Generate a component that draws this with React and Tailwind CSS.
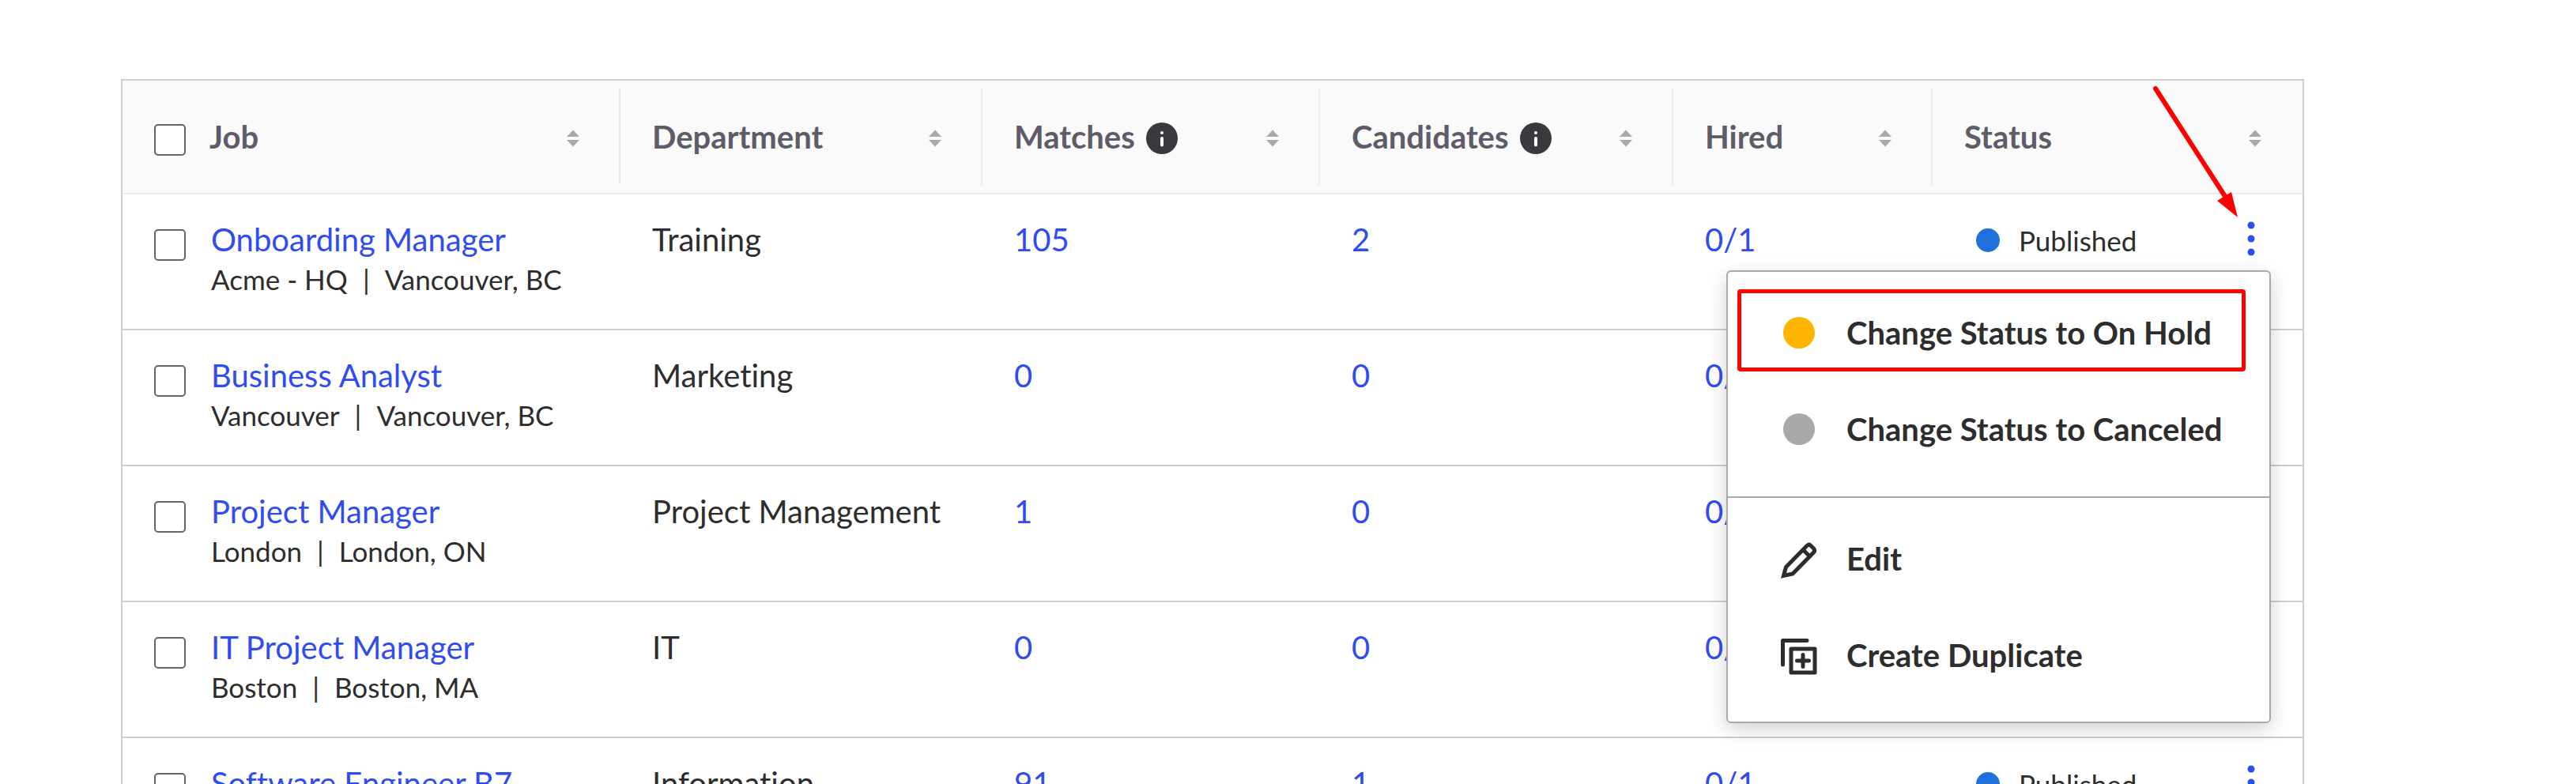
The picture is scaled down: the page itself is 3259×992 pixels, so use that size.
import { useState } from 'react'

const COLUMNS = [
  { key: 'job', label: 'Job', width: 'w-[630px]' },
  { key: 'department', label: 'Department', width: 'w-[458px]' },
  { key: 'matches', label: 'Matches', width: 'w-[427px]', info: true },
  { key: 'candidates', label: 'Candidates', width: 'w-[447px]', info: true },
  { key: 'hired', label: 'Hired', width: 'w-[328px]' },
  { key: 'status', label: 'Status', width: 'w-[468px]' },
]

const JOBS = [
  { id: 1, title: 'Onboarding Manager', office: 'Acme - HQ', city: 'Vancouver, BC', department: 'Training', matches: 105, candidates: 2, hired: '0/1' },
  { id: 2, title: 'Business Analyst', office: 'Vancouver', city: 'Vancouver, BC', department: 'Marketing', matches: 0, candidates: 0, hired: '0/1' },
  { id: 3, title: 'Project Manager', office: 'London', city: 'London, ON', department: 'Project Management', matches: 1, candidates: 0, hired: '0/1' },
  { id: 4, title: 'IT Project Manager', office: 'Boston', city: 'Boston, MA', department: 'IT', matches: 0, candidates: 0, hired: '0/1' },
  { id: 5, title: 'Software Engineer B7', office: 'Boston', city: 'Boston, MA', department: 'Information', matches: 91, candidates: 1, hired: '0/1' },
]

function Checkbox({ label }) {
  return (
    <input
      type="checkbox"
      aria-label={label}
      className="size-10 shrink-0 appearance-none rounded-[5px] border-2 border-[#64646e] bg-white checked:bg-[#304cf0]"
    />
  )
}

function SortButton({ label }) {
  return (
    <button type="button" aria-label={`Sort by ${label}`} className="ml-auto shrink-0">
      <svg width="16" height="22" viewBox="0 0 16 22" fill="#a9a9a9">
        <path d="M8 0.5 16 9H0Z" />
        <path d="M8 21.5 16 13H0Z" />
      </svg>
    </button>
  )
}

function InfoIcon() {
  return (
    <svg width="40" height="40" viewBox="0 0 40 40" className="ml-[14px] shrink-0">
      <circle cx="20" cy="20" r="20" fill="#3a393e" />
      <circle cx="20" cy="13" r="2" fill="#fff" />
      <path d="M20 20V28.500" stroke="#fff" strokeWidth="4" strokeLinecap="round" />
    </svg>
  )
}

function PencilIcon() {
  return (
    <svg width="46" height="46" viewBox="0 0 46 46" fill="none" stroke="#2d2d2d" strokeWidth="5" strokeLinejoin="miter">
      <path d="M3.500 42.500 6.500 31.500 33 4.500Q35.500 2 38 4.500L41.500 8Q44 10.500 41.500 13L15 40Z" />
      <path d="M28 9.500 36.500 18" />
    </svg>
  )
}

function DuplicateIcon() {
  return (
    <svg width="46" height="46" viewBox="0 0 46 46" fill="none" stroke="#2d2d2d" strokeWidth="5" strokeLinecap="round" strokeLinejoin="round">
      <path d="M2.500 33V2.500H33" />
      <path d="M13 13H43V43H13Z" />
      <path d="M28 20.500V35.500M20.500 28H35.500" />
    </svg>
  )
}

function MenuItem({ icon, children }) {
  return (
    <button type="button" role="menuitem" className="flex h-[122px] w-full items-center pl-[66px] text-left font-bold text-[#2d2d2d]">
      <span className="flex w-12 shrink-0 justify-center">{icon}</span>
      <span className="ml-9 whitespace-nowrap">{children}</span>
    </button>
  )
}

function ActionsMenu() {
  return (
    <div
      role="menu"
      className="absolute top-[96px] right-[40px] z-10 w-[689px] rounded-md border-2 border-[#a9a9a9] bg-white shadow-[0_8px_24px_rgba(0,0,0,0.18)]"
    >
      <div className="border-b-2 border-[#a9a9a9] pt-4 pb-6">
        <MenuItem icon={<span className="size-10 rounded-full bg-[#ffb400]" />}>Change Status to On Hold</MenuItem>
        <MenuItem icon={<span className="size-10 rounded-full bg-[#a9a9a9]" />}>Change Status to Canceled</MenuItem>
      </div>
      <div className="pt-4 pb-[23px]">
        <MenuItem icon={<span className="pt-1"><PencilIcon /></span>}>Edit</MenuItem>
        <MenuItem icon={<span className="pt-1"><DuplicateIcon /></span>}>Create Duplicate</MenuItem>
      </div>
      {/* Highlight around the first action */}
      <div className="pointer-events-none absolute top-[22px] left-3 h-[104px] w-[643px] rounded-sm border-[5px] border-[#ff0000]" />
    </div>
  )
}

// Callout arrow that points at the row's kebab button
function Arrow() {
  return (
    <svg width="112" height="172" viewBox="0 0 112 172" className="pointer-events-none absolute -top-[139px] right-[79px] z-20">
      <path d="M5 5 94 143" stroke="#ff0000" strokeWidth="6" strokeLinecap="round" />
      <path d="M109 168 83 147 101 136Z" fill="#ff0000" />
    </svg>
  )
}

function JobRow({ job, menuOpen, onToggleMenu }) {
  return (
    <tr className="h-[172px] border-b-2 border-[#cdcdd2] align-top">
      <td className="pt-8 pl-10">
        <div className="flex">
          <div className="flex pt-3">
            <Checkbox label={`Select ${job.title}`} />
          </div>
          <div className="ml-8">
            <a href="#job" className="block leading-[50px] text-[#304cf0]">{job.title}</a>
            <p className="text-[35px] leading-[50px]">
              {job.office}
              <span className="mx-[19px]">|</span>
              {job.city}
            </p>
          </div>
        </div>
      </td>
      <td className="pt-8 pl-10 leading-[50px]">{job.department}</td>
      <td className="pt-8 pl-10 leading-[50px]"><a href="#matches" className="text-[#304cf0]">{job.matches}</a></td>
      <td className="pt-8 pl-10 leading-[50px]"><a href="#candidates" className="text-[#304cf0]">{job.candidates}</a></td>
      <td className="pt-8 pl-10 leading-[50px]"><a href="#hired" className="text-[#304cf0]">{job.hired}</a></td>
      <td className="relative pt-8 pl-[55px]">
        <div className="flex items-center pr-[53px] text-[35px] leading-[52px]">
          <span className="size-[30px] rounded-full bg-[#2070dc]" />
          <span className="ml-6">Published</span>
          <button type="button" aria-label={`Actions for ${job.title}`} onClick={onToggleMenu} className="ml-auto px-1 pb-1">
            <svg width="16" height="44" viewBox="0 0 16 44" fill="#304cf0">
              <circle cx="8" cy="5" r="4.500" />
              <circle cx="8" cy="22" r="4.500" />
              <circle cx="8" cy="39" r="4.500" />
            </svg>
          </button>
        </div>
        {menuOpen && (
          <>
            <ActionsMenu />
            <Arrow />
          </>
        )}
      </td>
    </tr>
  )
}

export default function App() {
  const [openMenu, setOpenMenu] = useState(1)

  return (
    <main className="h-screen overflow-hidden bg-white pt-[100px] pr-[344px] pl-[153px] font-['Lato',sans-serif] text-[40px] text-[#2d2d2d] [font-variant-ligatures:none]">
      <div className="border-2 border-[#cdcdd2]">
        <table className="w-full table-fixed border-collapse">
          <thead>
            <tr className="border-b-2 border-[#ececec] bg-[#fafafa]">
              {COLUMNS.map((col) => (
                <th key={col.key} scope="col" className={`${col.width} group py-[10px] text-left font-bold text-[#5d5c68]`}>
                  <div className="flex h-[122px] items-center border-r-2 border-[#ececec] pt-1 pr-[50px] pl-10 group-last:border-transparent">
                    {col.key === 'job' && (
                      <div className="mr-[30px] flex pt-1">
                        <Checkbox label="Select all jobs" />
                      </div>
                    )}
                    <span className="pb-1 leading-[48px]">{col.label}</span>
                    {col.info && <InfoIcon />}
                    <SortButton label={col.label} />
                  </div>
                </th>
              ))}
            </tr>
          </thead>
          <tbody>
            {JOBS.map((job) => (
              <JobRow
                key={job.id}
                job={job}
                menuOpen={openMenu === job.id}
                onToggleMenu={() => setOpenMenu(openMenu === job.id ? null : job.id)}
              />
            ))}
          </tbody>
        </table>
      </div>
    </main>
  )
}
